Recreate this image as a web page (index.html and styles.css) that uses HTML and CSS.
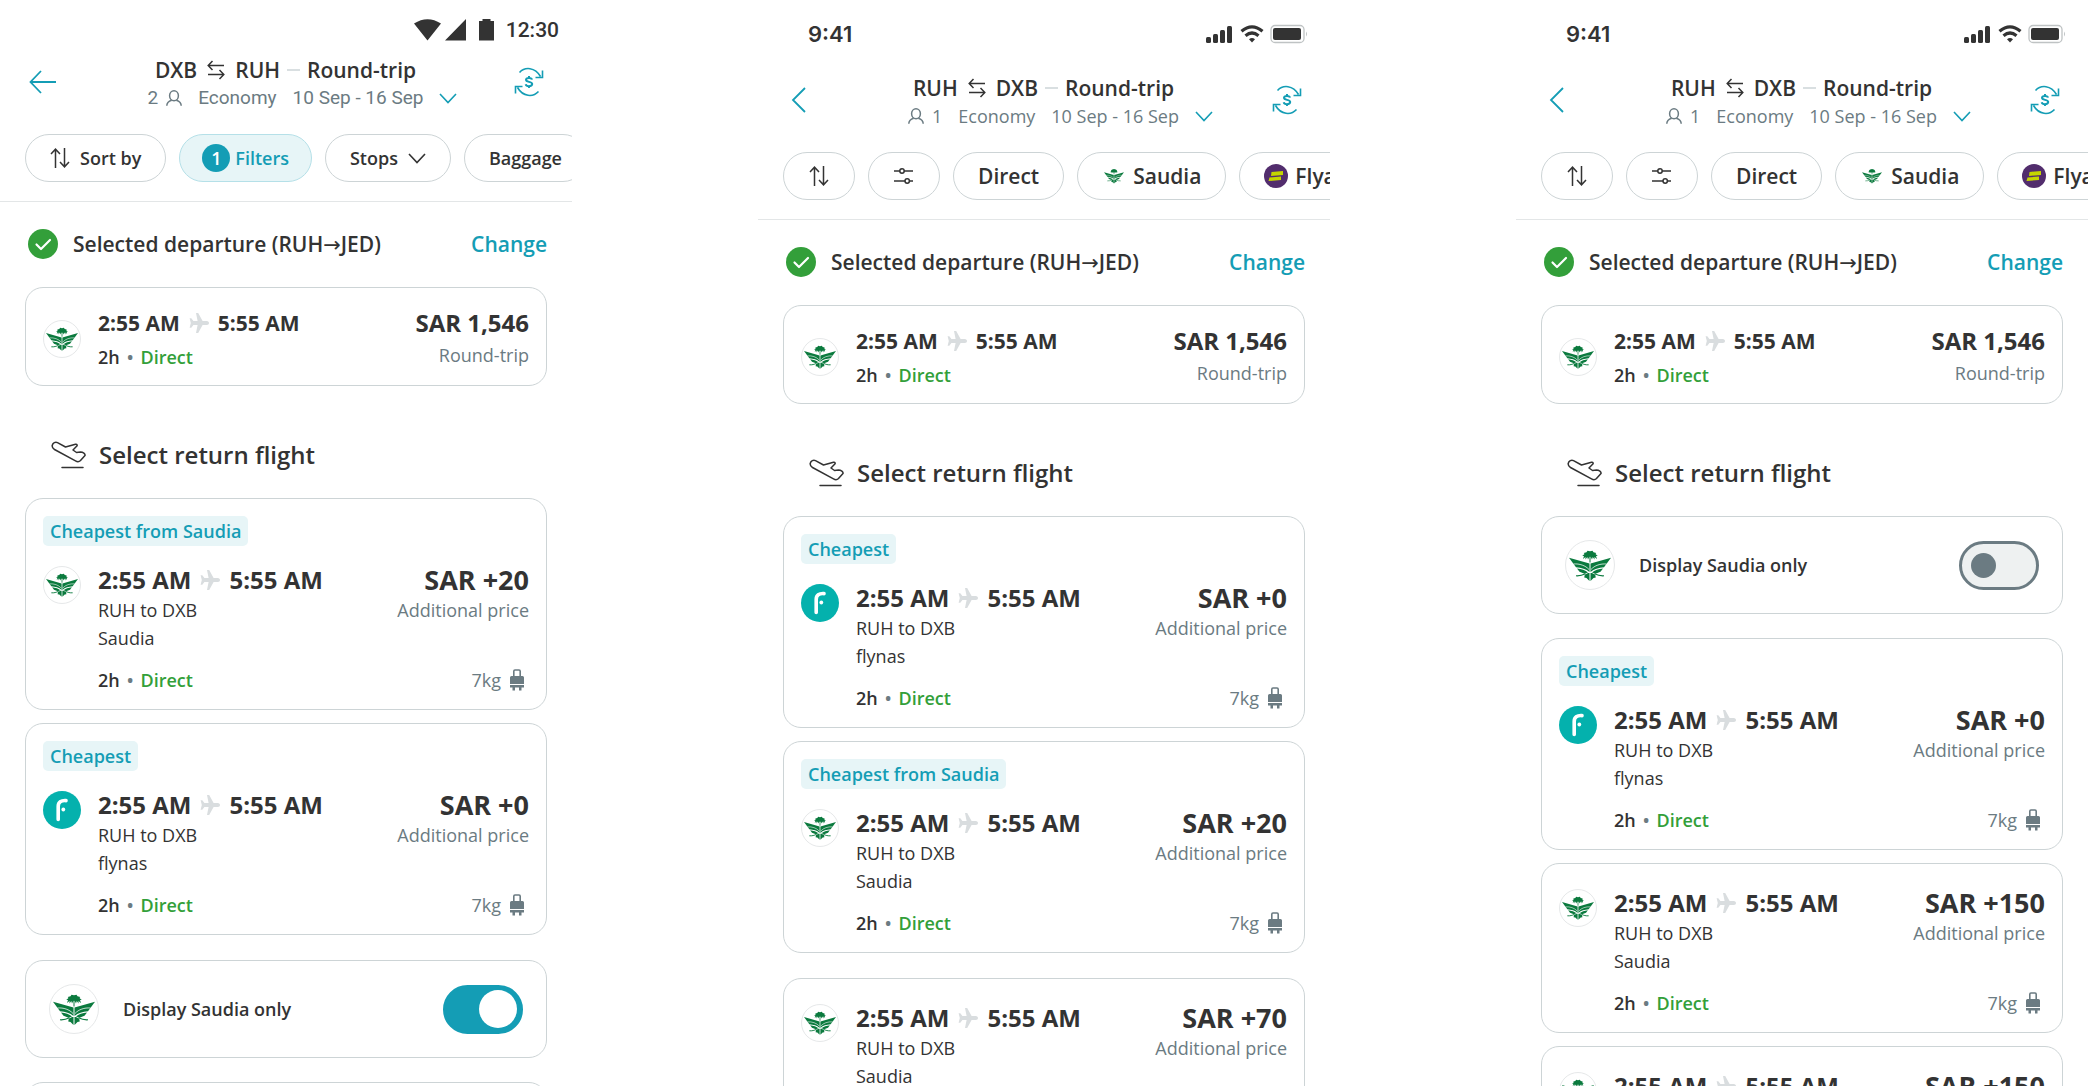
FILE: index.html
```html
<!DOCTYPE html>
<html lang="en">
<head>
    <meta charset="UTF-8">
    <meta name="viewport" content="width=device-width, initial-scale=1.0">
    <title>Select return flight</title>
    <link rel="stylesheet" href="styles.css">
</head>
<body>
    <!-- Shared icons -->
    <svg class="sprite" aria-hidden="true">
        <symbol id="saudia" viewBox="0 0 84 62">
            <g fill="#0b7a3e">
                <path d="M41 25V13L38 19L36.500 14L33 19L33 14L28 18L30 12L26.500 12L31 8L29.500 6L35 4.500L37 1.500L42 2.500L47 1.500L49 4.500L54.500 6L53 8L57.500 12L54 12L56 18L51 14L51 19L47.500 14L46 19L43 13V25Z"/>
                <path d="M0 15.500L41 27V44C34 37.500 25 36 14 34.500Z"/>
                <path d="M84 15.500L43 27V44C50 37.500 59 36 70 34.500Z"/>
                <path d="M16 37C25 38 33 40.500 38 45L31 47.500L21 43.500Z"/>
                <path d="M68 37C59 38 51 40.500 46 45L53 47.500L63 43.500Z"/>
                <path d="M41 46V62L35 56L30.500 55L31.500 49.500L38 46Z"/>
                <path d="M43 46V62L49 56L53.500 55L52.500 49.500L46 46Z"/>
            </g>
            <path d="M9 28C21 27 33 31 40 39M75 28C63 27 51 31 44 39" fill="none" stroke="#fff" stroke-width="1.500"/>
            <path d="M14 51.500C21 52 27 50.500 33 47.500M70 51.500C63 52 57 50.500 51 47.500" fill="none" stroke="#0b7a3e" stroke-width="2.400"/>
        </symbol>
        <symbol id="flynas" viewBox="0 0 38 38">
            <circle cx="19" cy="19" r="19" fill="#04b1ad"/>
            <path d="M15.200 28.500V15.500C15.200 11 18 9.300 23 9.600" fill="none" stroke="#fff" stroke-width="3.600" stroke-linecap="round"/>
            <circle cx="20.300" cy="18.500" r="1.900" fill="#fff"/>
        </symbol>
        <symbol id="flyadeal" viewBox="0 0 24 24">
            <circle cx="12" cy="12" r="12" fill="#522d6d"/>
            <path d="M7.500 8L19 7V11L7 12Z M5.500 13.500L17 12.500V16L4.500 17Z" fill="#c4d600"/>
        </symbol>
        <symbol id="plane" viewBox="0 0 20 20">
            <path d="M7 0H9.200L13.600 8H17.800C19.200 8 20 9 20 10S19.200 12 17.800 12H13.600L9.200 20H7L8.600 12H4.400L2.300 14.800H.6L1.800 10L.6 5.200H2.300L4.400 8H8.600Z" fill="#d9dddf"/>
        </symbol>
        <symbol id="bag" viewBox="0 0 14 22">
            <path d="M3.800 9V2.300Q3.800 1 5 1H9Q10.200 1 10.200 2.300V9" fill="none" stroke="#6b7b82" stroke-width="1.600"/>
            <path d="M1.500 7H12.500Q14 7 14 8.500V15H0V8.500Q0 7 1.500 7ZM0 16H14V18.500H0ZM2.500 18.500H5V21.500H2.500ZM9 18.500H11.500V21.500H9Z" fill="#6b7b82"/>
        </symbol>
        <symbol id="swap" viewBox="0 0 18 20">
            <path d="M17 5.500H1.500M5.500 1L1.200 5.500L5.500 10M1 14.500H16.500M12.500 10L16.800 14.500L12.500 19" fill="none" stroke="#333" stroke-width="1.500"/>
        </symbol>
        <symbol id="sort" viewBox="0 0 20 20">
            <path d="M5.500 20V1M1 6L5.500 1.200L10 6M14.500 0V19M10 14L14.500 18.800L19 14" fill="none" stroke="#333" stroke-width="1.500"/>
        </symbol>
        <symbol id="sliders" viewBox="0 0 20 20">
            <path d="M0 5H6M10 5H19M0 15H11M15.500 15H19" fill="none" stroke="#333" stroke-width="1.500"/>
            <circle cx="8" cy="5" r="2.200" fill="none" stroke="#333" stroke-width="1.500"/>
            <circle cx="13.200" cy="15" r="2.200" fill="none" stroke="#333" stroke-width="1.500"/>
        </symbol>
        <symbol id="person" viewBox="0 0 16 16">
            <ellipse cx="8" cy="5.800" rx="4.400" ry="5" fill="none" stroke="#6b7b82" stroke-width="1.500"/>
            <path d="M.8 15.800C.8 12.500 3 11 5.700 10.200M15.200 15.800C15.200 12.500 13 11 10.300 10.200" fill="none" stroke="#6b7b82" stroke-width="1.500"/>
        </symbol>
        <symbol id="down" viewBox="0 0 18 11">
            <path d="M1 1L9 9.500L17 1" fill="none" stroke="currentColor" stroke-width="1.600"/>
        </symbol>
        <symbol id="currency" viewBox="0 0 30 30">
            <g fill="none" stroke="#149db5" stroke-width="1.600">
                <path d="M5.500 5.500C11-.5 21 0 26.500 9.500M28.500 3.500V10.500H21.500M24.500 24.500C19 30.500 9 30 3.500 20.500M1.500 26.500V19.500H8.500"/>
                <path d="M18 12.700C17.800 11.500 16.700 10.900 15 10.900C13.200 10.900 12 11.600 12 12.800C12 15.700 18.200 14 18.200 17.100C18.200 18.400 17 19.200 15 19.200C13.200 19.200 12 18.500 11.700 17.200M15 9V11M15 19V21" stroke-width="2"/>
            </g>
        </symbol>
        <symbol id="check" viewBox="0 0 30 30">
            <circle cx="15" cy="15" r="15" fill="#339f3a"/>
            <path d="M8.500 15.500L13 20L22 11" fill="none" stroke="#fff" stroke-width="2.200" stroke-linecap="round" stroke-linejoin="round"/>
        </symbol>
        <symbol id="landing" viewBox="0 0 36 28">
            <g fill="none" stroke="#333" stroke-width="1.500" stroke-linejoin="round" stroke-linecap="round">
                <path d="M1.200 4.500C1.800 1.800 4.500.6 6.500 1.600L14.500 6L24.500 3.300C26 3 26.800 4.300 25.600 5.300L22 9L25.500 11.500L29.500 11C32 11 34.500 13 34 14.500L29.500 19.500C28 21 26 20.800 24.500 19.800L3.500 8.500C1.800 7.500 1 6 1.200 4.500Z"/>
                <path d="M11 26.500H32"/>
            </g>
        </symbol>
        <symbol id="ios-status" viewBox="0 0 102 20">
            <g fill="#333">
                <rect x="0" y="13" width="5" height="6" rx="1.500"/>
                <rect x="7" y="10" width="5" height="9" rx="1.500"/>
                <rect x="14" y="6" width="5" height="13" rx="1.500"/>
                <rect x="21" y="2" width="5" height="17" rx="1.500"/>
                <rect x="67" y="4" width="28" height="12" rx="2"/>
                <path d="M46 18.500L43 15.200Q46 12.800 49 15.200Z"/>
            </g>
            <path d="M35.500 7.200Q46-1.600 56.500 7.200M39.500 11.700Q46 6.300 52.500 11.700" fill="none" stroke="#333" stroke-width="3.200"/>
            <rect x="65" y="1.500" width="33" height="17" rx="4" fill="none" stroke="#bfc3c4" stroke-width="1.300"/>
            <path d="M100 7.500Q102 10 100 12.500Z" fill="#bfc3c4"/>
        </symbol>
        <symbol id="android-status" viewBox="0 0 80 22">
            <path d="M0 4.500Q13.500-4 27 4.500L13.500 21.500ZM31 21.500L52 0V21.500ZM65 2H68.500V0H76.500V2H80V21.500H65Z" fill="#333"/>
        </symbol>
    </svg>

    <main class="screens">

        <!-- Android, Saudia filter on -->
        <section class="phone android">
            <div class="status">
                <svg class="android-icons"><use href="#android-status"/></svg>
                <span>12:30</span>
            </div>
            <header class="header">
                <button class="icon-btn" aria-label="Back">
                    <svg width="28" height="24" viewBox="0 0 28 24"><path d="M27 12H2M12 1L1.500 12L12 23" fill="none" stroke="#149db5" stroke-width="1.800"/></svg>
                </button>
                <div class="trip">
                    <h1>DXB <svg class="swap"><use href="#swap"/></svg> RUH <span class="dash"></span> Round-trip</h1>
                    <button class="trip-info">
                        <span class="pax">2 <svg class="person"><use href="#person"/></svg></span>
                        <span>Economy</span>
                        <span>10 Sep - 16 Sep</span>
                        <svg class="down"><use href="#down"/></svg>
                    </button>
                </div>
                <button class="icon-btn" aria-label="Currency"><svg class="currency"><use href="#currency"/></svg></button>
            </header>
            <nav class="chips">
                <button class="chip"><svg class="chip-icon"><use href="#sort"/></svg>Sort by</button>
                <button class="chip active"><span class="count">1</span>Filters</button>
                <button class="chip">Stops<svg class="down"><use href="#down"/></svg></button>
                <button class="chip">Baggage</button>
            </nav>
            <div class="content">
                <div class="selected">
                    <svg class="check"><use href="#check"/></svg>
                    <h2>Selected departure (RUH<span class="arrow">→</span>JED)</h2>
                    <a href="#">Change</a>
                </div>
                <article class="card departure">
                    <span class="logo"><svg><use href="#saudia"/></svg></span>
                    <div class="info">
                        <p class="times">2:55 AM <svg class="plane"><use href="#plane"/></svg> 5:55 AM</p>
                        <p class="stops">2h <i>•</i> <b>Direct</b></p>
                    </div>
                    <div class="cost">
                        <p class="price">SAR 1,546</p>
                        <p class="note">Round-trip</p>
                    </div>
                </article>

                <h2 class="return-title"><svg class="landing"><use href="#landing"/></svg>Select return flight</h2>

                <div class="group">
                    <article class="card">
                        <span class="tag">Cheapest from Saudia</span>
                        <div class="flight">
                            <span class="logo"><svg><use href="#saudia"/></svg></span>
                            <div class="info">
                                <p class="times">2:55 AM <svg class="plane"><use href="#plane"/></svg> 5:55 AM</p>
                                <p class="route">RUH to DXB<br>Saudia</p>
                                <p class="stops">2h <i>•</i> <b>Direct</b></p>
                            </div>
                            <div class="cost">
                                <p class="price">SAR +20</p>
                                <p class="note">Additional price</p>
                                <p class="baggage">7kg <svg class="bag"><use href="#bag"/></svg></p>
                            </div>
                        </div>
                    </article>
                    <article class="card">
                        <span class="tag">Cheapest</span>
                        <div class="flight">
                            <span class="logo flynas"><svg><use href="#flynas"/></svg></span>
                            <div class="info">
                                <p class="times">2:55 AM <svg class="plane"><use href="#plane"/></svg> 5:55 AM</p>
                                <p class="route">RUH to DXB<br>flynas</p>
                                <p class="stops">2h <i>•</i> <b>Direct</b></p>
                            </div>
                            <div class="cost">
                                <p class="price">SAR +0</p>
                                <p class="note">Additional price</p>
                                <p class="baggage">7kg <svg class="bag"><use href="#bag"/></svg></p>
                            </div>
                        </div>
                    </article>
                </div>
                <label class="card toggle">
                    <span class="logo large"><svg><use href="#saudia"/></svg></span>
                    <span class="toggle-text">Display Saudia only</span>
                    <input type="checkbox" class="switch" checked>
                </label>
                <div class="group">
                    <article class="card no-tag">
                        <div class="flight">
                            <span class="logo"><svg><use href="#saudia"/></svg></span>
                        </div>
                    </article>
                </div>
            </div>
        </section>

        <!-- iOS, no toggle -->
        <section class="phone ios">
            <div class="status">
                <span>9:41</span>
                <svg class="ios-icons"><use href="#ios-status"/></svg>
            </div>
            <header class="header">
                <button class="icon-btn" aria-label="Back">
                    <svg width="28" height="26" viewBox="0 0 28 26"><path d="M18 1L6 13L18 25" fill="none" stroke="#149db5" stroke-width="1.800"/></svg>
                </button>
                <div class="trip">
                    <h1>RUH <svg class="swap"><use href="#swap"/></svg> DXB <span class="dash"></span> Round-trip</h1>
                    <button class="trip-info">
                        <span class="pax"><svg class="person"><use href="#person"/></svg> 1</span>
                        <span>Economy</span>
                        <span>10 Sep - 16 Sep</span>
                        <svg class="down"><use href="#down"/></svg>
                    </button>
                </div>
                <button class="icon-btn" aria-label="Currency"><svg class="currency"><use href="#currency"/></svg></button>
            </header>
            <nav class="chips">
                <button class="chip" aria-label="Sort"><svg class="chip-icon"><use href="#sort"/></svg></button>
                <button class="chip" aria-label="Filters"><svg class="chip-icon"><use href="#sliders"/></svg></button>
                <button class="chip">Direct</button>
                <button class="chip"><svg class="chip-logo saudia"><use href="#saudia"/></svg>Saudia</button>
                <button class="chip"><svg class="chip-logo"><use href="#flyadeal"/></svg>Flyadeal</button>
            </nav>
            <div class="content">
                <div class="selected">
                    <svg class="check"><use href="#check"/></svg>
                    <h2>Selected departure (RUH<span class="arrow">→</span>JED)</h2>
                    <a href="#">Change</a>
                </div>
                <article class="card departure">
                    <span class="logo"><svg><use href="#saudia"/></svg></span>
                    <div class="info">
                        <p class="times">2:55 AM <svg class="plane"><use href="#plane"/></svg> 5:55 AM</p>
                        <p class="stops">2h <i>•</i> <b>Direct</b></p>
                    </div>
                    <div class="cost">
                        <p class="price">SAR 1,546</p>
                        <p class="note">Round-trip</p>
                    </div>
                </article>

                <h2 class="return-title"><svg class="landing"><use href="#landing"/></svg>Select return flight</h2>

                <div class="group">
                    <article class="card">
                        <span class="tag">Cheapest</span>
                        <div class="flight">
                            <span class="logo flynas"><svg><use href="#flynas"/></svg></span>
                            <div class="info">
                                <p class="times">2:55 AM <svg class="plane"><use href="#plane"/></svg> 5:55 AM</p>
                                <p class="route">RUH to DXB<br>flynas</p>
                                <p class="stops">2h <i>•</i> <b>Direct</b></p>
                            </div>
                            <div class="cost">
                                <p class="price">SAR +0</p>
                                <p class="note">Additional price</p>
                                <p class="baggage">7kg <svg class="bag"><use href="#bag"/></svg></p>
                            </div>
                        </div>
                    </article>
                    <article class="card">
                        <span class="tag">Cheapest from Saudia</span>
                        <div class="flight">
                            <span class="logo"><svg><use href="#saudia"/></svg></span>
                            <div class="info">
                                <p class="times">2:55 AM <svg class="plane"><use href="#plane"/></svg> 5:55 AM</p>
                                <p class="route">RUH to DXB<br>Saudia</p>
                                <p class="stops">2h <i>•</i> <b>Direct</b></p>
                            </div>
                            <div class="cost">
                                <p class="price">SAR +20</p>
                                <p class="note">Additional price</p>
                                <p class="baggage">7kg <svg class="bag"><use href="#bag"/></svg></p>
                            </div>
                        </div>
                    </article>
                </div>
                <div class="group">
                    <article class="card no-tag">
                        <div class="flight">
                            <span class="logo"><svg><use href="#saudia"/></svg></span>
                            <div class="info">
                                <p class="times">2:55 AM <svg class="plane"><use href="#plane"/></svg> 5:55 AM</p>
                                <p class="route">RUH to DXB<br>Saudia</p>
                            </div>
                            <div class="cost">
                                <p class="price">SAR +70</p>
                                <p class="note">Additional price</p>
                            </div>
                        </div>
                    </article>
                </div>
            </div>
        </section>

        <!-- iOS, Saudia filter off -->
        <section class="phone ios">
            <div class="status">
                <span>9:41</span>
                <svg class="ios-icons"><use href="#ios-status"/></svg>
            </div>
            <header class="header">
                <button class="icon-btn" aria-label="Back">
                    <svg width="28" height="26" viewBox="0 0 28 26"><path d="M18 1L6 13L18 25" fill="none" stroke="#149db5" stroke-width="1.800"/></svg>
                </button>
                <div class="trip">
                    <h1>RUH <svg class="swap"><use href="#swap"/></svg> DXB <span class="dash"></span> Round-trip</h1>
                    <button class="trip-info">
                        <span class="pax"><svg class="person"><use href="#person"/></svg> 1</span>
                        <span>Economy</span>
                        <span>10 Sep - 16 Sep</span>
                        <svg class="down"><use href="#down"/></svg>
                    </button>
                </div>
                <button class="icon-btn" aria-label="Currency"><svg class="currency"><use href="#currency"/></svg></button>
            </header>
            <nav class="chips">
                <button class="chip" aria-label="Sort"><svg class="chip-icon"><use href="#sort"/></svg></button>
                <button class="chip" aria-label="Filters"><svg class="chip-icon"><use href="#sliders"/></svg></button>
                <button class="chip">Direct</button>
                <button class="chip"><svg class="chip-logo saudia"><use href="#saudia"/></svg>Saudia</button>
                <button class="chip"><svg class="chip-logo"><use href="#flyadeal"/></svg>Flyadeal</button>
            </nav>
            <div class="content">
                <div class="selected">
                    <svg class="check"><use href="#check"/></svg>
                    <h2>Selected departure (RUH<span class="arrow">→</span>JED)</h2>
                    <a href="#">Change</a>
                </div>
                <article class="card departure">
                    <span class="logo"><svg><use href="#saudia"/></svg></span>
                    <div class="info">
                        <p class="times">2:55 AM <svg class="plane"><use href="#plane"/></svg> 5:55 AM</p>
                        <p class="stops">2h <i>•</i> <b>Direct</b></p>
                    </div>
                    <div class="cost">
                        <p class="price">SAR 1,546</p>
                        <p class="note">Round-trip</p>
                    </div>
                </article>

                <h2 class="return-title"><svg class="landing"><use href="#landing"/></svg>Select return flight</h2>

                <label class="card toggle">
                    <span class="logo large"><svg><use href="#saudia"/></svg></span>
                    <span class="toggle-text">Display Saudia only</span>
                    <input type="checkbox" class="switch">
                </label>
                <div class="group">
                    <article class="card">
                        <span class="tag">Cheapest</span>
                        <div class="flight">
                            <span class="logo flynas"><svg><use href="#flynas"/></svg></span>
                            <div class="info">
                                <p class="times">2:55 AM <svg class="plane"><use href="#plane"/></svg> 5:55 AM</p>
                                <p class="route">RUH to DXB<br>flynas</p>
                                <p class="stops">2h <i>•</i> <b>Direct</b></p>
                            </div>
                            <div class="cost">
                                <p class="price">SAR +0</p>
                                <p class="note">Additional price</p>
                                <p class="baggage">7kg <svg class="bag"><use href="#bag"/></svg></p>
                            </div>
                        </div>
                    </article>
                    <article class="card no-tag">
                        <div class="flight">
                            <span class="logo"><svg><use href="#saudia"/></svg></span>
                            <div class="info">
                                <p class="times">2:55 AM <svg class="plane"><use href="#plane"/></svg> 5:55 AM</p>
                                <p class="route">RUH to DXB<br>Saudia</p>
                                <p class="stops">2h <i>•</i> <b>Direct</b></p>
                            </div>
                            <div class="cost">
                                <p class="price">SAR +150</p>
                                <p class="note">Additional price</p>
                                <p class="baggage">7kg <svg class="bag"><use href="#bag"/></svg></p>
                            </div>
                        </div>
                    </article>
                    <article class="card no-tag">
                        <div class="flight">
                            <span class="logo"><svg><use href="#saudia"/></svg></span>
                            <div class="info">
                                <p class="times">2:55 AM <svg class="plane"><use href="#plane"/></svg> 5:55 AM</p>
                            </div>
                            <div class="cost">
                                <p class="price">SAR +150</p>
                            </div>
                        </div>
                    </article>
                </div>
            </div>
        </section>
    </main>
</body>
</html>
```
FILE: styles.css
```css
* {
    box-sizing: border-box;
}

body {
    margin: 0;
    font-family: "Open Sans", "Noto Sans", sans-serif;
    font-size: 18px;
    line-height: 28px;
    color: #333;
    background: #fff;
}

h1, h2, p {
    margin: 0;
}

button {
    font: inherit;
    color: inherit;
    background: none;
    border: none;
    padding: 0;
    cursor: pointer;
}

svg {
    display: block;
    flex-shrink: 0;
}

.sprite {
    display: none;
}

.screens {
    display: grid;
    grid-template-columns: repeat(3, minmax(0, 1fr));
    column-gap: 186px;
    height: 100vh;
    overflow: hidden;
}

.phone {
    overflow: hidden;
}

/* Status bar */
.status {
    display: flex;
    align-items: center;
}

.android .status {
    height: 56px;
    justify-content: flex-end;
    gap: 12px;
    padding: 4px 13px 0 0;
    font-family: Roboto, sans-serif;
    font-size: 21px;
    font-weight: 500;
}

.ios .status {
    height: 74px;
    justify-content: space-between;
    padding: 0 22px 6px 50px;
    font-family: Inter, sans-serif;
    font-size: 22px;
    font-weight: 600;
}

.android-icons {
    width: 80px;
    height: 24px;
}

.ios-icons {
    width: 102px;
    height: 20px;
}

/* Header */
.header {
    display: flex;
    justify-content: space-between;
    padding: 0 28px 0 29px;
}

.icon-btn {
    height: 52px;
    display: flex;
    align-items: center;
}

.currency {
    width: 30px;
    height: 30px;
}

.trip {
    display: flex;
    flex-direction: column;
    align-items: center;
}

.trip h1 {
    display: flex;
    align-items: center;
    gap: 10px;
    font-size: 21px;
    font-weight: 600;
    line-height: 28px;
}

.swap {
    width: 18px;
    height: 20px;
}

.dash {
    width: 13px;
    height: 2px;
    margin: 0 -3px;
    background: #d9dfe1;
}

.trip-info {
    display: flex;
    align-items: center;
    gap: 16px;
    padding-left: 34px;
    color: #6b7b82;
}

.android .trip-info {
    font-family: Roboto, sans-serif;
    font-size: 19px;
}

.pax {
    display: flex;
    align-items: center;
    gap: 8px;
}

.person {
    width: 16px;
    height: 16px;
}

.down {
    width: 18px;
    height: 11px;
}

.trip-info .down {
    color: #149db5;
}

/* Filter chips */
.chips {
    display: flex;
    gap: 13px;
    padding: 22px 0 19px 25px;
    border-bottom: 1px solid #e3e6e7;
    overflow: hidden;
}

.chip {
    display: flex;
    align-items: center;
    flex-shrink: 0;
    gap: 10px;
    height: 48px;
    padding: 0 24px;
    border: 1px solid #cdd4d6;
    border-radius: 24px;
    font-weight: 600;
}

.ios .chip {
    gap: 7px;
    font-size: 21px;
}

.chip.active {
    gap: 5px;
    padding: 0 22px;
    color: #149db5;
    background: #e7f5f7;
    border-color: #b5e0e8;
}

.chip-icon {
    width: 20px;
    height: 20px;
}

.ios .chip-icon {
    margin: 0 1px;
}

.chip-logo {
    width: 24px;
    height: 24px;
}

.chip-logo.saudia {
    width: 20px;
    height: 16px;
    margin: 0 2px;
}

.count {
    width: 28px;
    height: 28px;
    border-radius: 50%;
    background: #149db5;
    color: #fff;
    text-align: center;
}

/* Content */
.content {
    padding: 26px 25px;
}

.selected {
    display: flex;
    align-items: center;
    height: 32px;
    padding-left: 3px;
    margin-bottom: 27px;
}

.selected h2 {
    flex: 1;
    margin-left: 15px;
    font-size: 21px;
    font-weight: 600;
}

.arrow {
    font-family: "DejaVu Sans", sans-serif;
    font-weight: 400;
}

.selected a {
    font-size: 21px;
    font-weight: 600;
    color: #149db5;
    text-decoration: none;
}

.check {
    width: 30px;
    height: 30px;
}

.card {
    display: block;
    padding: 17px 17px 15px;
    border: 1px solid #cdd4d6;
    border-radius: 18px;
    background: #fff;
}

.card.no-tag {
    padding-top: 23px;
}

.card.departure {
    display: flex;
    padding: 19px 17px 14px;
}

.departure .logo {
    align-self: center;
    margin-top: 0;
}

.departure .times {
    font-size: 21px;
    margin-bottom: 4px;
}

.departure .stops {
    margin-top: 0;
}

.departure .price {
    font-size: 24px;
    margin-bottom: 2px;
}

.return-title {
    display: flex;
    align-items: center;
    gap: 12px;
    margin: 51px 0 25px 26px;
    font-size: 24px;
    font-weight: 600;
    line-height: 36px;
}

.landing {
    width: 36px;
    height: 28px;
}

.group {
    display: flex;
    flex-direction: column;
    gap: 13px;
    margin-bottom: 25px;
}

.tag {
    display: inline-block;
    padding: 0 7px;
    margin-bottom: 18px;
    border-radius: 5px;
    background: #e7f5f7;
    color: #149db5;
    font-weight: 600;
    line-height: 30px;
    vertical-align: top;
}

.flight {
    display: flex;
}

.logo {
    display: flex;
    align-items: center;
    justify-content: center;
    flex-shrink: 0;
    width: 38px;
    height: 38px;
    margin-top: 2px;
    border: 1px solid #e6e8e9;
    border-radius: 50%;
}

.logo svg {
    width: 32px;
    height: 24px;
}

.logo.flynas {
    border: none;
}

.logo.flynas svg {
    width: 38px;
    height: 38px;
}

.logo.large {
    width: 50px;
    height: 50px;
    margin: 0;
}

.logo.large svg {
    width: 42px;
    height: 31px;
}

.info {
    flex: 1;
    margin-left: 17px;
}

.times {
    display: flex;
    align-items: center;
    gap: 9px;
    font-size: 24px;
    font-weight: 700;
    line-height: 32px;
}

.plane {
    width: 20px;
    height: 20px;
}

.stops {
    display: flex;
    gap: 7px;
    margin-top: 14px;
    font-weight: 600;
}

.stops i {
    font-style: normal;
    color: #6b7b82;
}

.stops b {
    font-weight: 600;
    color: #339f3a;
}

.cost {
    text-align: right;
}

.price {
    font-size: 27px;
    font-weight: 700;
    line-height: 32px;
}

.note {
    color: #6b7b82;
}

.baggage {
    display: flex;
    align-items: center;
    justify-content: flex-end;
    gap: 9px;
    margin-top: 42px;
    padding-right: 5px;
    color: #6b7b82;
}

.bag {
    width: 14px;
    height: 22px;
}

/* Saudia toggle */
.toggle {
    display: flex;
    align-items: center;
    padding: 23px;
    margin-bottom: 24px;
    cursor: pointer;
}

.toggle-text {
    flex: 1;
    margin-left: 24px;
    font-weight: 600;
}

.switch {
    appearance: none;
    display: flex;
    align-items: center;
    width: 80px;
    height: 49px;
    margin: 0;
    padding: 0 9px;
    border: 3px solid #6b7b82;
    border-radius: 25px;
    background: #eef1f1;
    cursor: pointer;
}

.switch::before {
    content: "";
    width: 25px;
    height: 25px;
    border-radius: 50%;
    background: #6b7b82;
}

.switch:checked {
    justify-content: flex-end;
    padding: 0 3px;
    background: #149db5;
    border-color: #149db5;
}

.switch:checked::before {
    width: 38px;
    height: 38px;
    background: #fff;
}
```
